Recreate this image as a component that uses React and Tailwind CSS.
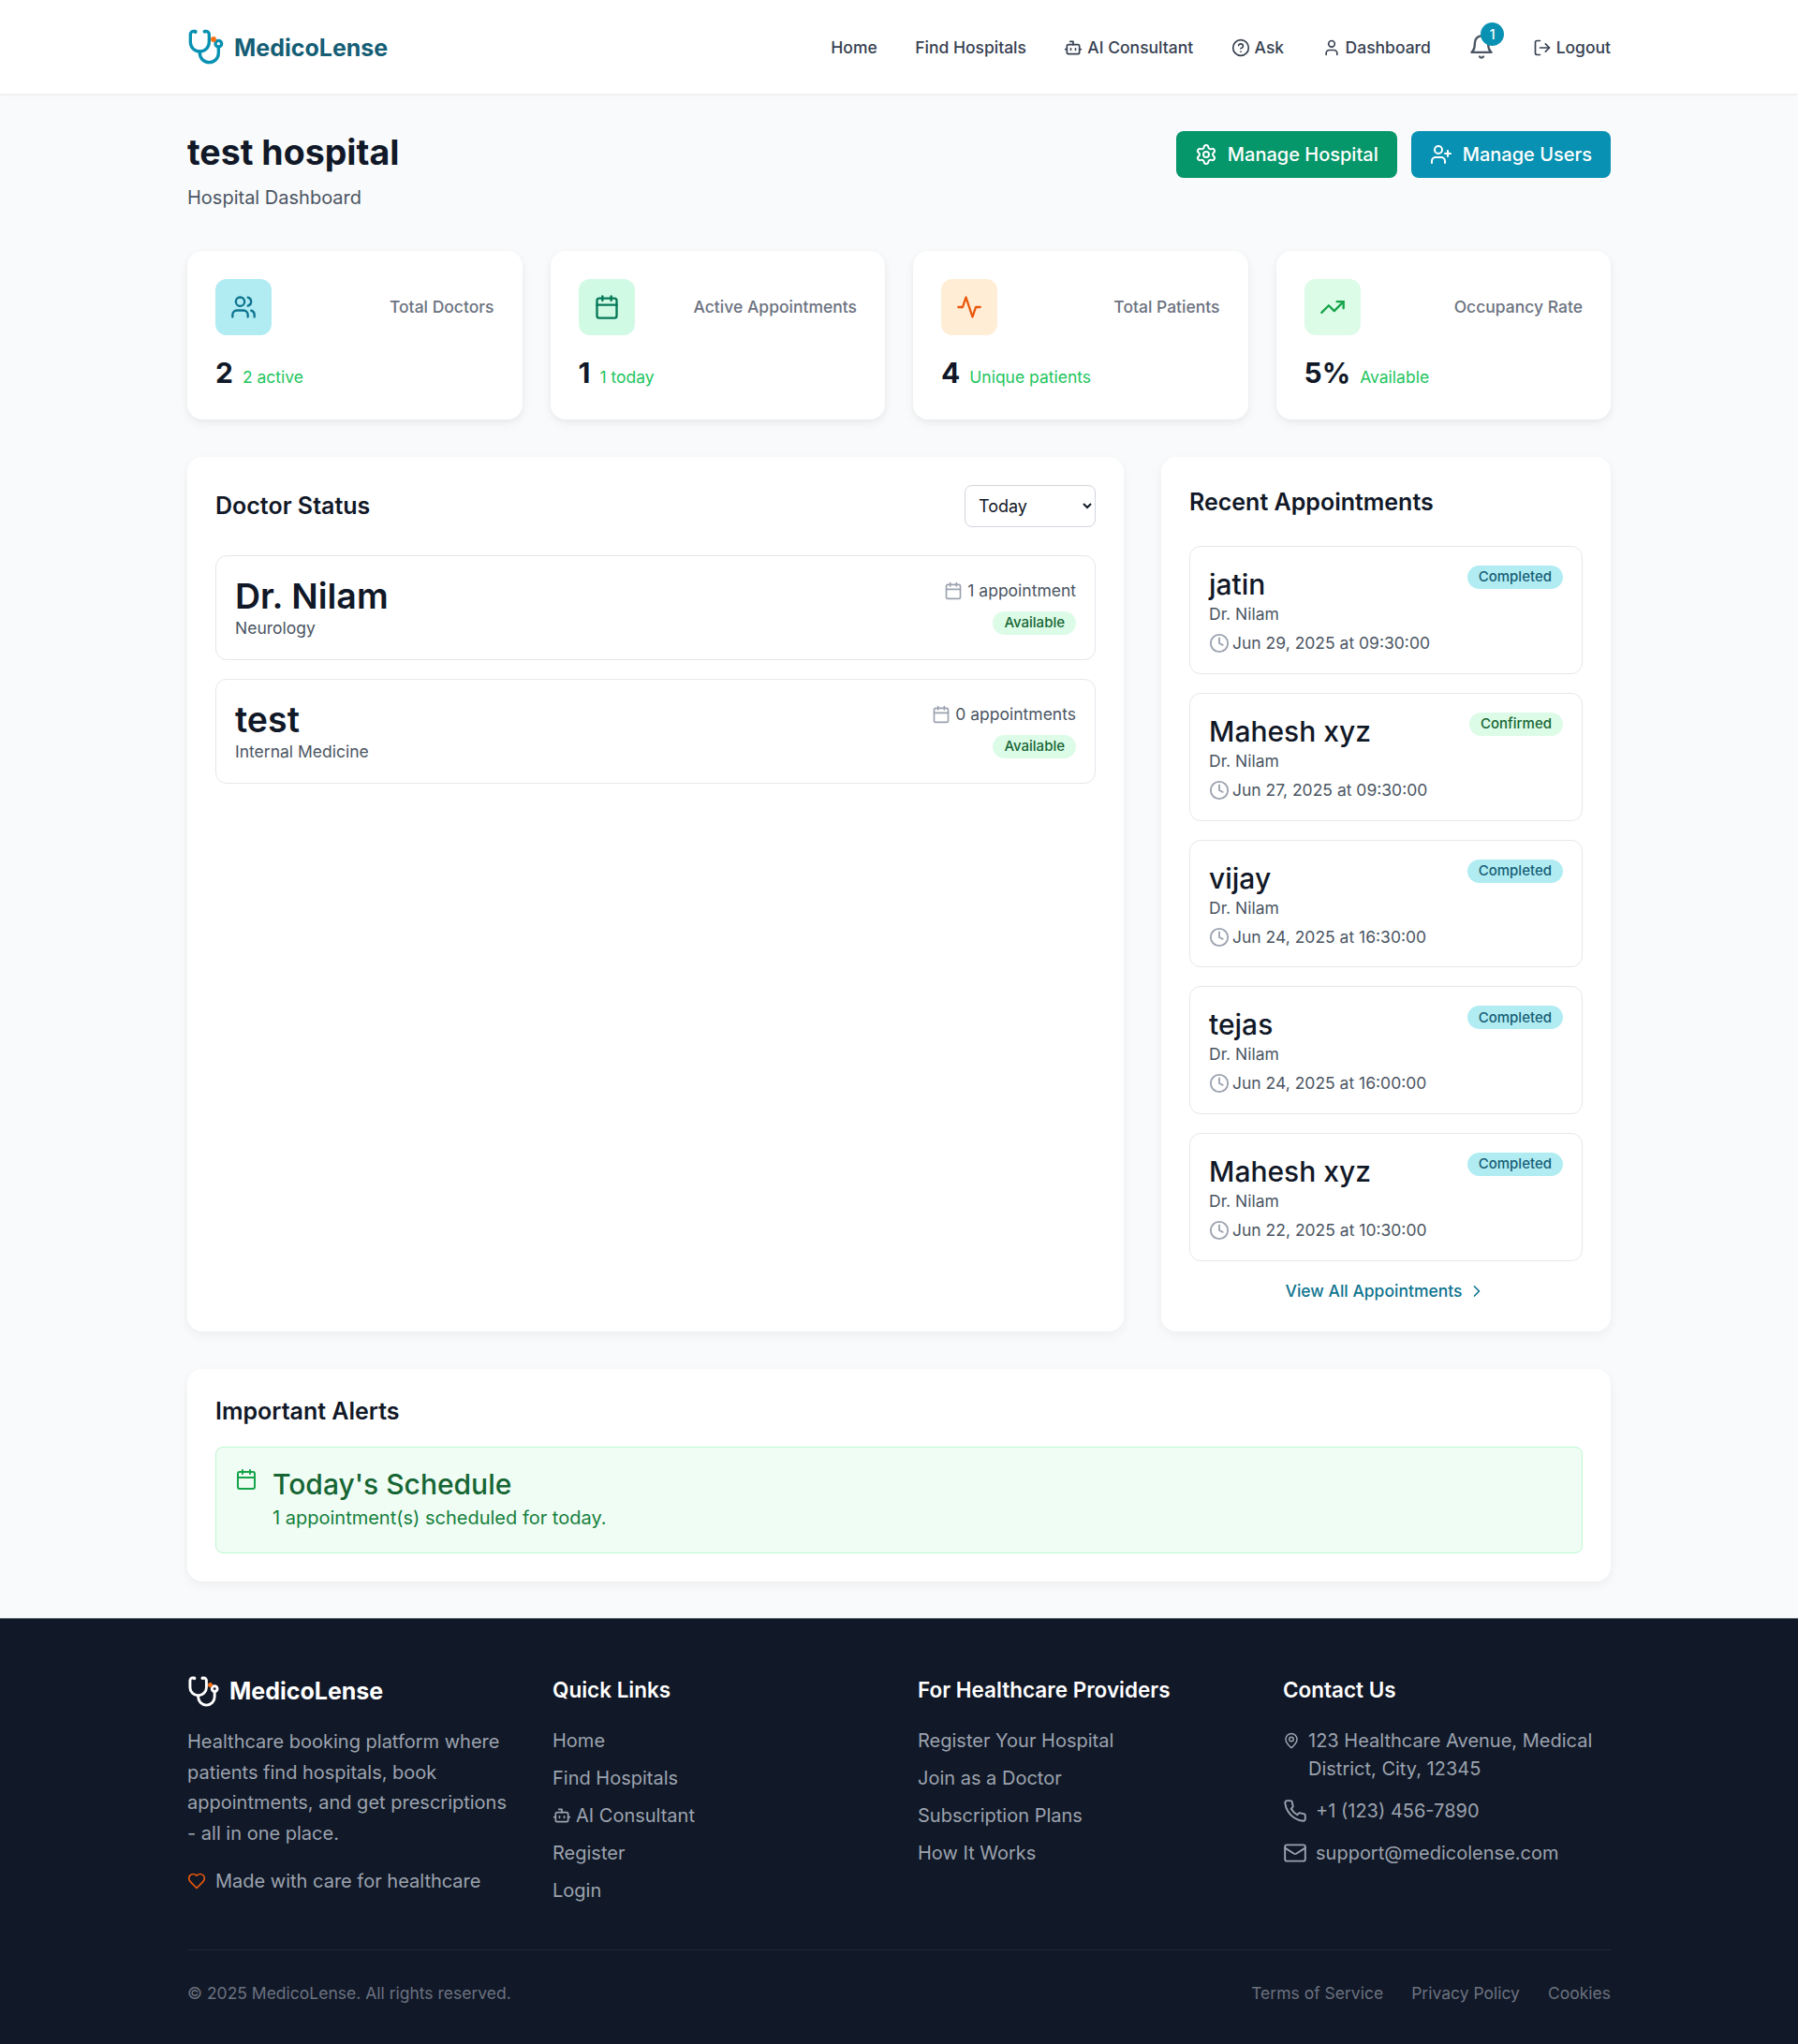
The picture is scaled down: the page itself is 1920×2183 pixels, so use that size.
import React from "react";
import { Settings, UserPlus, Users, Calendar, TrendingUp, Clock, ChevronRight, Bot, CircleHelp, User, LogOut, MapPin, Mail } from "lucide-react";

function Svg({ size, color = "currentColor", strokeWidth = 2, className, children }) {
  return (
    <svg width={size} height={size} viewBox="0 0 24 24" fill="none" stroke={color} strokeWidth={strokeWidth} strokeLinecap="round" strokeLinejoin="round" className={className}>
      {children}
    </svg>
  );
}

function Logo({ size, color, dot }) {
  return (
    <span className="relative inline-block shrink-0" style={{ width: size, height: size }}>
      <Svg size={size} color={color}>
        <path d="M4.8 2.3A.3.3 0 1 0 5 2H4a2 2 0 0 0-2 2v5a6 6 0 0 0 6 6a6 6 0 0 0 6-6V4a2 2 0 0 0-2-2h-1a.2.2 0 1 0 .3.3" />
        <path d="M8 15v1a6 6 0 0 0 6 6a6 6 0 0 0 6-6v-4" />
        <circle cx="20" cy="10" r="2" />
      </Svg>
      <span className={"absolute rounded-full bg-[#f97316] " + dot} />
    </span>
  );
}

const ActivityIcon = (p) => (
  <Svg {...p}><polyline points="22 12 18 12 15 21 9 3 6 12 2 12" /></Svg>
);
const BellIcon = (p) => (
  <Svg {...p}>
    <path d="M6 8a6 6 0 0 1 12 0c0 7 3 9 3 9H3s3-2 3-9" />
    <path d="M10.3 21a1.94 1.94 0 0 0 3.4 0" />
  </Svg>
);
const HeartIcon = (p) => (
  <Svg {...p}><path d="M19 14c1.49-1.46 3-3.21 3-5.5A5.5 5.5 0 0 0 16.5 3c-1.76 0-3 .5-4.5 2-1.5-1.5-2.74-2-4.5-2A5.5 5.5 0 0 0 2 8.5c0 2.3 1.5 4.05 3 5.5l7 7Z" /></Svg>
);
const PhoneIcon = (p) => (
  <Svg {...p}><path d="M22 16.92v3a2 2 0 0 1-2.18 2 19.79 19.79 0 0 1-8.63-3.07 19.5 19.5 0 0 1-6-6 19.79 19.79 0 0 1-3.07-8.67A2 2 0 0 1 4.11 2h3a2 2 0 0 1 2 1.72 12.84 12.84 0 0 0 .7 2.81 2 2 0 0 1-.45 2.11L8.09 9.91a16 16 0 0 0 6 6l1.27-1.27a2 2 0 0 1 2.11-.45 12.84 12.84 0 0 0 2.81.7A2 2 0 0 1 22 16.92z" /></Svg>
);

function Nav({ children, icon: I }) {
  return (
    <a className="flex items-center gap-[5px] text-[17.5px] leading-[28px] mt-px font-medium text-[#374151]">
      {I && <I size={20} strokeWidth={2} />}
      {children}
    </a>
  );
}

function Stat({ icon: I, box, col, label, value, sub }) {
  return (
    <div className="bg-white rounded-2xl p-[30px] h-[180px] shadow-[0_4px_12px_rgba(0,0,0,0.05),0_2px_6px_rgba(0,0,0,0.03)]">
      <div className="flex items-center justify-between">
        <div className={"w-[60px] h-[60px] rounded-xl flex items-center justify-center " + box}>
          <I size={28} color={col} strokeWidth={2} />
        </div>
        <div className="text-[17.5px] leading-[28px] font-medium text-[#6b7280]">{label}</div>
      </div>
      <div className="flex items-baseline gap-[10px] mt-[20px]">
        <span className="text-[30px] leading-[40px] font-bold text-[#111827]">{value}</span>
        <span className="text-[17.5px] text-[#22c55e]">{sub}</span>
      </div>
    </div>
  );
}

function Doctor({ name, spec, appts }) {
  return (
    <div className="border border-[#e5e7eb] rounded-xl px-5 pt-[23px] h-[112px] flex justify-between">
      <div>
        <div className="text-[37.5px] leading-[40px] font-semibold text-[#111827]">{name}</div>
        <div className="text-[17.5px] leading-[28px] text-[#4b5563]">{spec}</div>
      </div>
      <div className="flex flex-col items-end">
        <div className="flex items-center gap-[5px] text-[17.5px] leading-[28px] text-[#4b5563]">
          <Calendar size={20} color="#9ca3af" strokeWidth={2} />
          {appts}
        </div>
        <span className="mt-[8px] h-[25px] px-3 rounded-full bg-[#dcfce7] text-[#166534] text-[15px] font-medium flex items-center">Available</span>
      </div>
    </div>
  );
}

function Appt({ name, when, status }) {
  const done = status === "Completed";
  return (
    <div className="relative border border-[#e5e7eb] rounded-xl px-5 pt-[22px] h-[136.8px]">
      <div className="text-[30px] leading-[36px] font-medium text-[#111827]">{name}</div>
      <div className="text-[17.5px] leading-[28px] text-[#4b5563]">Dr. Nilam</div>
      <div className="flex items-center gap-[3px] mt-[3px] text-[17.5px] leading-[28px] text-[#4b5563]">
        <Clock size={22} color="#9ca3af" strokeWidth={2} />
        {when}
      </div>
      <span className={"absolute top-[20px] right-[20px] h-[25px] px-3 rounded-full text-[15px] font-medium flex items-center " + (done ? "bg-[#b1ecf3] text-[#155e75]" : "bg-[#dcfce7] text-[#166534]")}>{status}</span>
    </div>
  );
}

function FootHead({ children }) {
  return <h3 className="text-[22.5px] leading-[32px] font-semibold text-white mb-[24px]">{children}</h3>;
}

function FootLink({ children, icon: I }) {
  return (
    <a className="flex items-center gap-[5px] text-[20px] leading-[28px] text-[#9ca3af] mb-[12px]">
      {I && <I size={20} strokeWidth={2} />}
      {children}
    </a>
  );
}

export default function App() {
  return (
    <div className="min-h-screen bg-[#f9fafb] font-['Inter',sans-serif]">
      <header className="h-[100px] bg-white shadow-[0_1px_3px_rgba(0,0,0,0.08)]">
        <div className="w-[1520px] mx-auto h-full flex items-center justify-between">
          <div className="flex items-center gap-[10px]">
            <Logo size={40} color="#0891b2" dot="w-[6px] h-[6px] left-[24.7px] top-[9px]" />
            <span className="text-[25px] leading-[40px] mt-px font-bold text-[#155e75]">MedicoLense</span>
          </div>
          <nav className="flex items-center gap-[40.4px]">
            <Nav>Home</Nav>
            <Nav>Find Hospitals</Nav>
            <Nav icon={Bot}>AI Consultant</Nav>
            <Nav icon={CircleHelp}>Ask</Nav>
            <Nav icon={User}>Dashboard</Nav>
            <div className="relative">
              <BellIcon size={28} color="#4b5563" />
              <span className="absolute -top-[12px] -right-[10px] w-[25px] h-[25px] rounded-full bg-[#0891b2] text-white text-[14px] font-medium flex items-center justify-center">1</span>
            </div>
            <Nav icon={LogOut}>Logout</Nav>
          </nav>
        </div>
      </header>

      <main className="w-[1520px] mx-auto pt-10 pb-[39px]">
        <div className="flex items-start justify-between h-[88px]">
          <div>
            <h1 className="text-[37.5px] leading-[46px] font-bold text-[#111827]">test hospital</h1>
            <p className="text-[20px] leading-[28px] mt-[11px] text-[#4b5563]">Hospital Dashboard</p>
          </div>
          <div className="flex gap-[15px]">
            <button className="h-[50px] px-[20px] rounded-lg bg-[#059669] text-white text-[20px] font-medium flex items-center gap-[11px]">
              <Settings size={24} strokeWidth={2} />Manage Hospital
            </button>
            <button className="h-[50px] px-[20px] rounded-lg bg-[#0891b2] text-white text-[20px] font-medium flex items-center gap-[11px]">
              <UserPlus size={24} strokeWidth={2} />Manage Users
            </button>
          </div>
        </div>

        <div className="grid grid-cols-4 gap-[30px] mt-10">
          <Stat icon={Users} box="bg-[#b1ecf3]" col="#0e7490" label="Total Doctors" value="2" sub="2 active" />
          <Stat icon={Calendar} box="bg-[#d1fae5]" col="#047857" label="Active Appointments" value="1" sub="1 today" />
          <Stat icon={ActivityIcon} box="bg-[#ffedd5]" col="#ea580c" label="Total Patients" value="4" sub="Unique patients" />
          <Stat icon={TrendingUp} box="bg-[#dcfce7]" col="#16a34a" label="Occupancy Rate" value="5%" sub="Available" />
        </div>

        <div className="grid grid-cols-[1000px_480px] gap-10 mt-10">
          <section className="bg-white rounded-2xl p-[30px] h-[934px] shadow-[0_4px_12px_rgba(0,0,0,0.05)]">
            <div className="flex items-center justify-between mb-[30px]">
              <h2 className="text-[25px] font-semibold text-[#111827]">Doctor Status</h2>
              <select className="w-[140px] h-[45px] px-[10px] bg-white border border-[#d1d5db] rounded-lg text-[18px] text-[#111827]">
                <option>Today</option>
              </select>
            </div>
            <div className="flex flex-col gap-[20px]">
              <Doctor name="Dr. Nilam" spec="Neurology" appts="1 appointment" />
              <Doctor name="test" spec="Internal Medicine" appts="0 appointments" />
            </div>
          </section>
          <section className="bg-white rounded-2xl p-[30px] h-[934px] shadow-[0_4px_12px_rgba(0,0,0,0.05)]">
            <h2 className="text-[25px] leading-[36px] font-semibold text-[#111827] mb-[29px]">Recent Appointments</h2>
            <div className="flex flex-col gap-[20px]">
              <Appt name="jatin" when="Jun 29, 2025 at 09:30:00" status="Completed" />
              <Appt name="Mahesh xyz" when="Jun 27, 2025 at 09:30:00" status="Confirmed" />
              <Appt name="vijay" when="Jun 24, 2025 at 16:30:00" status="Completed" />
              <Appt name="tejas" when="Jun 24, 2025 at 16:00:00" status="Completed" />
              <Appt name="Mahesh xyz" when="Jun 22, 2025 at 10:30:00" status="Completed" />
            </div>
            <a className="flex items-center justify-center gap-[6px] mt-[19px] text-[17.5px] font-medium text-[#0e7490]">
              View All Appointments <ChevronRight size={20} strokeWidth={2} />
            </a>
          </section>
        </div>

        <section className="bg-white rounded-2xl p-[30px] mt-10 h-[227px] shadow-[0_4px_12px_rgba(0,0,0,0.05)]">
          <h2 className="text-[25px] leading-[30px] font-semibold text-[#111827] mb-[23px]">Important Alerts</h2>
          <div className="flex gap-[16px] h-[114px] px-[20px] py-[20px] bg-[#f0fdf4] border border-[#bbf7d0] rounded-lg">
            <Calendar size={24} color="#16a34a" strokeWidth={2} className="shrink-0 mt-[2px]" />
            <div className="pt-[1px]">
              <div className="text-[30px] leading-[36px] font-medium text-[#166534]">Today's Schedule</div>
              <div className="text-[20px] leading-[28px] mt-[4px] text-[#15803d]">1 appointment(s) scheduled for today.</div>
            </div>
          </div>
        </section>
      </main>

      <footer className="bg-[#111827] border-t border-[#6b7280] h-[455px]">
        <div className="w-[1520px] mx-auto pt-[60px]">
          <div className="grid grid-cols-4 gap-10 h-[293px]">
            <div>
              <div className="flex items-center gap-[10px] mb-[20px]">
                <Logo size={35} color="#ffffff" dot="w-[5px] h-[5px] left-[22px] top-[8px]" />
                <span className="text-[25px] leading-[35px] font-bold text-white">MedicoLense</span>
              </div>
              <p className="text-[20px] leading-[32.5px] text-[#9ca3af]">Healthcare booking platform where patients find hospitals, book appointments, and get prescriptions - all in one place.</p>
              <div className="flex items-center gap-[10px] mt-[21px] text-[20px] leading-[28px] text-[#9ca3af]">
                <HeartIcon size={20} color="#ea580c" />Made with care for healthcare
              </div>
            </div>
            <div>
              <FootHead>Quick Links</FootHead>
              <FootLink>Home</FootLink>
              <FootLink>Find Hospitals</FootLink>
              <FootLink icon={Bot}>AI Consultant</FootLink>
              <FootLink>Register</FootLink>
              <FootLink>Login</FootLink>
            </div>
            <div>
              <FootHead>For Healthcare Providers</FootHead>
              <FootLink>Register Your Hospital</FootLink>
              <FootLink>Join as a Doctor</FootLink>
              <FootLink>Subscription Plans</FootLink>
              <FootLink>How It Works</FootLink>
            </div>
            <div>
              <FootHead>Contact Us</FootHead>
              <div className="flex gap-[9px] -mt-px text-[20px] leading-[30px] text-[#9ca3af]">
                <MapPin size={18} strokeWidth={2} className="shrink-0 mt-[6px]" />
                <span>123 Healthcare Avenue, Medical District, City, 12345</span>
              </div>
              <div className="flex items-center gap-[9px] mt-[15px] text-[20px] leading-[30px] text-[#9ca3af]">
                <PhoneIcon size={26} strokeWidth={1.75} />+1 (123) 456-7890
              </div>
              <div className="flex items-center gap-[9px] mt-[15px] text-[20px] leading-[30px] text-[#9ca3af]">
                <Mail size={26} strokeWidth={1.75} />support@medicolense.com
              </div>
            </div>
          </div>
          <div className="border-t border-[#1f2937] pt-[32px] flex justify-between text-[17.5px] leading-[28px] text-[#6b7280]">
            <span>© 2025 MedicoLense. All rights reserved.</span>
            <div className="flex gap-[30px]"><span>Terms of Service</span><span>Privacy Policy</span><span>Cookies</span></div>
          </div>
        </div>
      </footer>
    </div>
  );
}
